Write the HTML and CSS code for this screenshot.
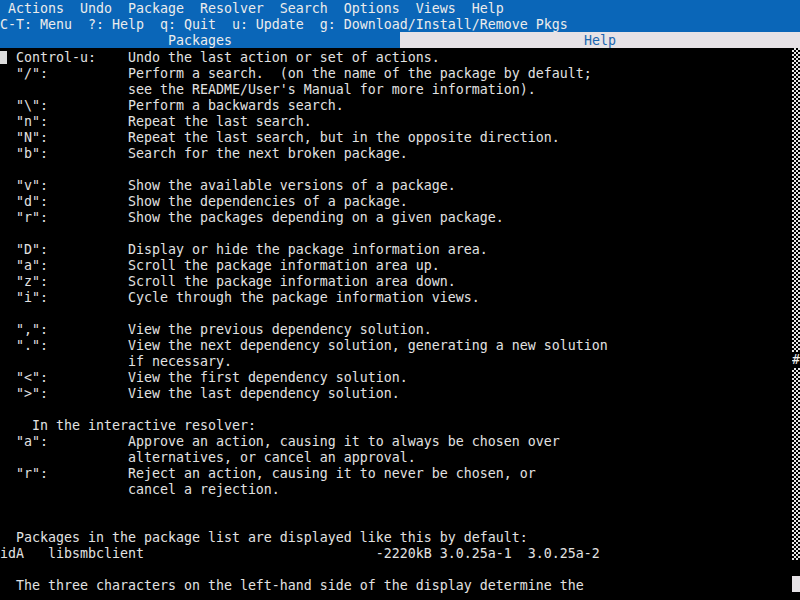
FILE: index.html
```html
<!DOCTYPE html>
<html>
<head>
<meta charset="utf-8">
<title>aptitude help</title>
<link rel="stylesheet" href="styles.css">
</head>
<body>
<div class="screen">
  <div class="ln menubar"> Actions  Undo  Package  Resolver  Search  Options  Views  Help</div>
  <div class="ln status">C-T: Menu  ?: Help  q: Quit  u: Update  g: Download/Install/Remove Pkgs</div>
  <div class="tabs">
    <div class="tab tab-pkgs">Packages</div>
    <div class="tab tab-help">Help</div>
  </div>
  <div class="main">
<pre class="text"><span class="cur"> </span> Control-u:    Undo the last action or set of actions.
  "/":          Perform a search.  (on the name of the package by default;
                see the README/User's Manual for more information).
  "\":          Perform a backwards search.
  "n":          Repeat the last search.
  "N":          Repeat the last search, but in the opposite direction.
  "b":          Search for the next broken package.

  "v":          Show the available versions of a package.
  "d":          Show the dependencies of a package.
  "r":          Show the packages depending on a given package.

  "D":          Display or hide the package information area.
  "a":          Scroll the package information area up.
  "z":          Scroll the package information area down.
  "i":          Cycle through the package information views.

  ",":          View the previous dependency solution.
  ".":          View the next dependency solution, generating a new solution
                if necessary.
  "&lt;":          View the first dependency solution.
  "&gt;":          View the last dependency solution.

    In the interactive resolver:
  "a":          Approve an action, causing it to always be chosen over
                alternatives, or cancel an approval.
  "r":          Reject an action, causing it to never be chosen, or
                cancel a rejection.


  Packages in the package list are displayed like this by default:
idA   libsmbclient                             -2220kB 3.0.25a-1  3.0.25a-2

  The three characters on the left-hand side of the display determine the
</pre>
    <div class="scroll">
      <div class="ck ck-top"></div>
      <div class="thumb">#</div>
      <div class="ck ck-bot"></div>
      <div class="gap"></div>
      <div class="blk"></div>
    </div>
  </div>
</div>
</body>
</html>
```
FILE: styles.css
```css
html, body {
  margin: 0;
  padding: 0;
  background: #000;
}
.screen {
  width: 800px;
  height: 600px;
  overflow: hidden;
  display: flex;
  flex-direction: column;
  font-family: "DejaVu Sans Mono", monospace;
  font-size: 13.29px;
  color: #e2e2e2;
}
.ln {
  height: 15px;
  padding-top: 1px;
  line-height: 16px;
  white-space: pre;
  overflow: hidden;
}
.menubar, .status {
  background: #0a66b8;
  color: #ececec;
}
.tabs {
  display: flex;
  height: 16px;
}
.tab {
  flex: 1;
  height: 15px;
  padding-top: 1px;
  line-height: 16px;
  text-align: center;
  overflow: hidden;
}
.tab-pkgs {
  background: #0a66b8;
  color: #ececec;
}
.tab-help {
  background: #e6e2e6;
  color: #1a66b0;
}
.main {
  flex: 1;
  display: flex;
  min-height: 0;
}
.text {
  flex: 1;
  margin: 0;
  padding-top: 2px;
  font: inherit;
  line-height: 16px;
  color: #e2e2e2;
  white-space: pre;
  overflow: hidden;
}
.cur {
  display: inline-block;
  width: 7px;
  height: 13px;
  margin-right: 1px;
  vertical-align: -1px;
  background: #dcdcdc;
}
.scroll {
  width: 8px;
  display: flex;
  flex-direction: column;
}
.ck {
  background: repeating-conic-gradient(#e6e6e6 0 25%, #000 0 50%) 0 0 / 4px 4px;
}
.ck-top { height: 304px; }
.thumb {
  height: 16px;
  line-height: 16px;
  text-align: center;
  color: #f0f0f0;
  background: #000;
  overflow: hidden;
}
.ck-bot { height: 192px; }
.gap { height: 16px; }
.blk {
  height: 16px;
  background: #e6e2e6;
}
```
